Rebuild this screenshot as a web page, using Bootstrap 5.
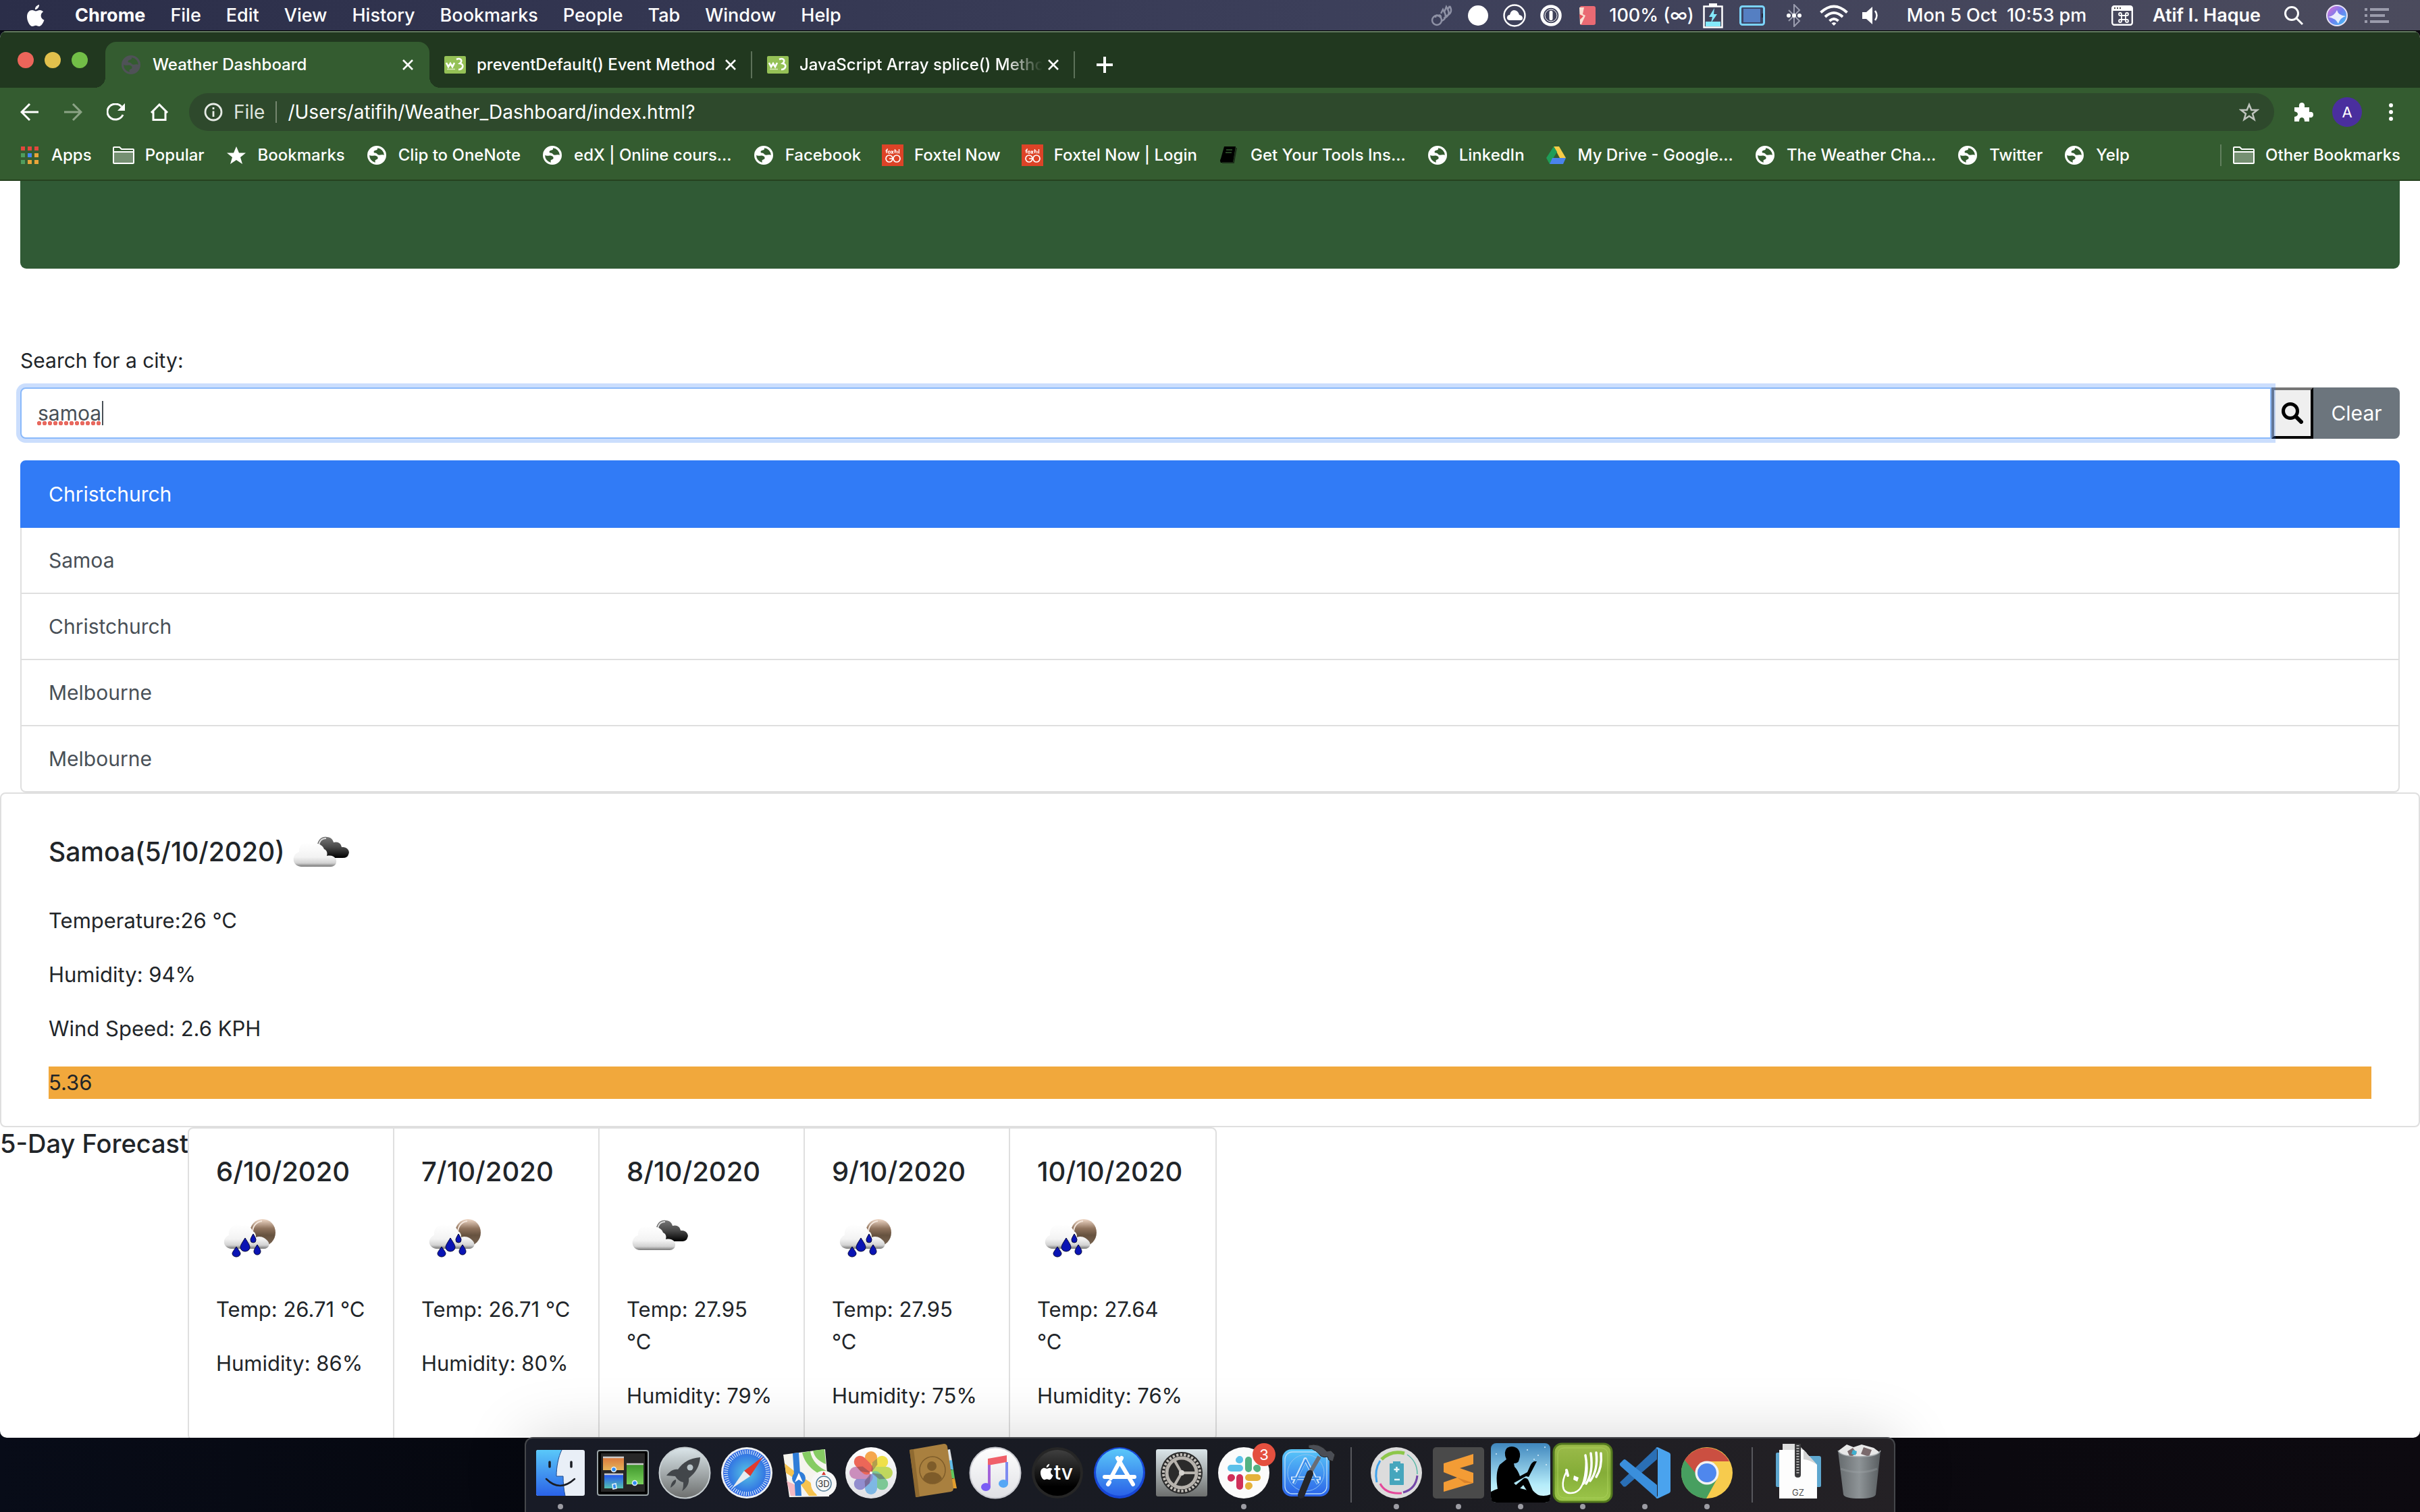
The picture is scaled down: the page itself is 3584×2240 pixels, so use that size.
<!DOCTYPE html>
<html lang="en">
<head>
<meta charset="utf-8">
<meta name="viewport" content="width=device-width, initial-scale=1">
<title>Weather Dashboard</title>
<link href="https://cdn.jsdelivr.net/npm/bootstrap@5.3.0/dist/css/bootstrap.min.css" rel="stylesheet">
<style>
:root{--strip:#21381f;--bar:#345c30;--omni:#2e492c;--rule:#dfdfdf}
body{font-family:Inter,"Liberation Sans",sans-serif;font-size:30px;line-height:48px;color:#212529;background:linear-gradient(90deg,#080c18,#05060c 30%,#0d0a10)}
a{color:inherit;text-decoration:none}
svg{display:block;flex:none}
button{font:inherit;color:inherit}
.desktop{height:100vh}
/* system menu bar */
.sysbar{height:46px;font-size:27px;line-height:44px;font-weight:500;color:#fff;background:linear-gradient(90deg,#2b2e49,#3c3f5a 55%,#4b4b5d);border-bottom:1px solid #000;padding-right:42px}
.sysmenu{gap:37px;padding-left:40px}
.slot{display:flex;justify-content:center;align-items:center;flex:none;width:54px;white-space:pre}
.s44{width:44px}.s46{width:46px}.s64{width:64px}.s70{width:70px}.s74{width:74px}.s132{width:136px}.s204{width:204px}.s326{width:326px}
/* browser window */
.browser{flex:1 1 0;min-height:0;border-radius:10px;overflow:hidden;background:#fff}
.tabstrip{height:84px;background:var(--strip);border-top:2px solid #627960;padding-top:14px;font-size:24px;line-height:32px;font-weight:500;color:#fff}
.lights{width:156px;padding:15px 0 0 26px;gap:16px}
.light{width:24px;height:24px;border-radius:50%}
.red{background:#ec655a}.amber{background:#e1c04c}.green{background:#72be47}
.tab{width:478px;height:68px;padding:0 20px 0 22px;gap:16px;position:relative}
.tab-on{width:480px;background:var(--bar);border-radius:16px 16px 0 0}
.tab-on::before,.tab-on::after{content:"";position:absolute;bottom:0;width:16px;height:16px}
.tab-on::before{left:-16px;background:radial-gradient(circle at 0 0,transparent 16px,var(--bar) 16px)}
.tab-on::after{right:-16px;background:radial-gradient(circle at 100% 0,transparent 16px,var(--bar) 16px)}
.tab-line::after{content:"";position:absolute;right:0;top:14px;height:40px;width:2px;background:#5d7159}
.tab-name{flex:1;white-space:nowrap;overflow:hidden;margin-right:-12px}
.tab-fade{-webkit-mask-image:linear-gradient(90deg,#000 84%,transparent);mask-image:linear-gradient(90deg,#000 84%,transparent)}
.bare{border:0;background:none;padding:0}
.tools{background:var(--bar);color:#fff;padding-top:8px;border-bottom:2px solid #26421f}
.navset{padding:0 12px}
.navbtn{width:64px;display:flex;justify-content:center}
.omni{flex:1;height:56px;border-radius:28px;background:var(--omni);padding:0 22px;gap:16px;font-size:28px;line-height:40px}
.omni input{flex:1;border:0;background:none;color:#fff;outline:0;padding:0;min-width:0}
.scheme{color:#dfe4de}
.omniline{width:2px;height:32px;background:#75866f}
.extbtn{padding:0 28px}
.dotsbtn{padding:0 40px}
.avatar{width:44px;height:44px;border-radius:50%;background:#4a2f9e;font-size:22px;line-height:44px}
.marks{height:72px;font-size:24px;line-height:32px;font-weight:500;gap:31px;padding:0 29px 0 28px;white-space:nowrap}
.marks a{display:flex;align-items:center;gap:16px}
.otherline{width:2px;height:32px;background:#62805e;margin-left:auto;margin-right:-14px}
/* dashboard page */
.pad{padding:0 30px}
.hero{height:130px;background:#305a35;border-radius:0 0 9px 9px;margin-bottom:112px}
.citylabel{margin-bottom:16px;display:block}
.searchrow{height:76px;margin-bottom:32px}
.cityinput{height:76px;border:2px solid #8ab9fa;border-radius:8px 0 0 8px;padding:12px 24px;font-size:30px;line-height:48px;color:#495057;position:relative;z-index:2}
.cityinput,.cityinput:focus{box-shadow:0 0 0 6px rgba(49,123,246,.25);border-color:#8ab9fa}
.caret{position:absolute;z-index:3;left:122px;top:20px;width:2px;height:36px;background:#495057}
.spell{position:absolute;z-index:3;left:26px;top:50px;width:94px;height:6px;background:radial-gradient(circle at 3px 3px,#e8695f 3px,transparent 3px) 0 0/8px 6px}
.findbtn{width:62px;border:4px outset #222;border-color:#767676 #222 #222 #767676;background:#efefef;padding:0;display:flex;align-items:center;justify-content:center}
.clearbtn{width:128px;padding:0;font-size:30px;border-radius:0 8px 8px 0;background:#6c757d;border:0}
.cities{--bs-list-group-border-color:var(--rule);--bs-list-group-border-width:2px;--bs-list-group-border-radius:8px;--bs-list-group-item-padding-x:40px;--bs-list-group-item-padding-y:24px;--bs-list-group-color:#495057;--bs-list-group-action-color:#495057;--bs-list-group-active-bg:#317bf6;--bs-list-group-active-border-color:#317bf6}
.today{border:2px solid var(--rule);border-radius:8px;padding:40px 70px}
.today p,.day p{font-size:31px;margin-bottom:32px}
.today p:last-child,.day p:last-child{margin-bottom:0}
.today .today-name{height:100px;margin-bottom:24px;gap:4px;font-size:39px}
.uv{background:#f1a83c}
.fc-name{flex:0 0 278px;min-width:0;font-size:38px;line-height:48px;white-space:nowrap;margin:0}
.days{border:2px solid var(--rule);border-radius:8px}
.day{width:304px;padding:40px;border-right:2px solid var(--rule)}
.day:last-child{border-right:0}
.day h5{font-size:40px;line-height:48px;margin-bottom:24px;white-space:nowrap}
.day svg{margin-bottom:32px}
/* dock */
.dock{height:111px;margin-top:-1px;padding:5px 5px 0;background:linear-gradient(90deg,#181b26,#191b22 50%,#242125);border:2px solid #45474b;border-bottom:0;border-radius:12px 12px 0 0;box-shadow:0 0 90px rgba(0,0,0,.17);position:relative;z-index:4}
.app{display:block;width:92px;position:relative}
.app.running::after{content:"";position:absolute;left:42px;top:92px;width:8px;height:8px;border-radius:50%;background:#9c9ca3}
.dockline{width:2px;height:82px;background:#57585d;margin:8px 20px 0}
.count{position:absolute;left:59px;top:2px;width:34px;height:34px;border-radius:50%;background:#e4503f;color:#fff;font-size:22px;line-height:34px;text-align:center}
</style>
</head>
<body>
<svg width="0" height="0" class="position-absolute" aria-hidden="true">
<defs>
<linearGradient id="gw" x2="0" y2="1"><stop stop-color="#fff"/><stop offset=".6" stop-color="#f3f3f3"/><stop offset=".85" stop-color="#d2d2d2"/><stop offset="1" stop-color="#777"/></linearGradient>
<linearGradient id="gk" x2="0" y2="1"><stop stop-color="#777"/><stop offset=".5" stop-color="#484848"/><stop offset="1" stop-color="#000"/></linearGradient>
<linearGradient id="gm" x2="0" y2="1"><stop stop-color="#f0d9c8"/><stop offset=".35" stop-color="#8f735d"/><stop offset=".6" stop-color="#66523f"/><stop offset="1" stop-color="#7a6654"/></linearGradient>
<linearGradient id="gsil" x2="0" y2="1"><stop stop-color="#dbe6ea"/><stop offset="1" stop-color="#6d6f6e"/></linearGradient>
<linearGradient id="gblue" x2="0" y2="1"><stop stop-color="#5ac8f9"/><stop offset="1" stop-color="#2a62e8"/></linearGradient>
<linearGradient id="gdisc" x2="0" y2="1"><stop stop-color="#fff"/><stop offset="1" stop-color="#dfe0e4"/></linearGradient>
<linearGradient id="gtv" x2="0" y2="1"><stop stop-color="#3f3f3f"/><stop offset=".8" stop-color="#000"/></linearGradient>
<linearGradient id="gkin" x2="0" y2="1"><stop stop-color="#3f86bd"/><stop offset=".7" stop-color="#b5ecfa"/><stop offset="1" stop-color="#d8f7fc"/></linearGradient>
<linearGradient id="gbin" x2="1" y2="0"><stop stop-color="#666b6e"/><stop offset=".5" stop-color="#8e9497"/><stop offset="1" stop-color="#585d60"/></linearGradient>
<radialGradient id="gsaf"><stop stop-color="#56c5e3"/><stop offset="1" stop-color="#2a62e3"/></radialGradient>
<linearGradient id="gor" x2="0" y2="1"><stop stop-color="#d9743a"/><stop offset="1" stop-color="#e5b35a"/></linearGradient>
<linearGradient id="ggr" x2="0" y2="1"><stop stop-color="#3f962c"/><stop offset="1" stop-color="#79d15b"/></linearGradient>
<linearGradient id="gbt" x2="0" y2="1"><stop stop-color="#2457ec"/><stop offset="1" stop-color="#55c1b2"/></linearGradient>
<linearGradient id="gnoor" x2="0" y2="1"><stop stop-color="#9cbb4a"/><stop offset=".5" stop-color="#85ad38"/><stop offset="1" stop-color="#9cc64a"/></linearGradient>
<linearGradient id="gsiri" x2="1" y2="1"><stop stop-color="#e86ad0"/><stop offset=".5" stop-color="#6f7ff0"/><stop offset="1" stop-color="#3cc8f5"/></linearGradient>
</defs>
<symbol id="globe" viewBox="0 0 28 28"><path fill="currentColor" fill-rule="evenodd" d="M14 0a14 14 0 1 1 0 28a14 14 0 0 1 0-28zM15 3.200C15.500 5 14.500 6.300 12.600 6.600C10.600 7 9.200 8 9.600 9.600C9.800 10.700 10.900 10.600 12.600 10.700C14.600 10.900 14.600 13.200 16.600 13.600C18.800 14 20.900 12.600 24.900 13.800A11 11 0 0 0 15 3.200zM3.100 14A11 11 0 0 0 11.400 24.700C12.600 24.200 10.600 22.300 12 21.200C13.400 20.100 15.300 20.300 15.600 18.300C15.900 16.200 13.900 14.900 11.300 14.500C8.800 14.100 5.800 15.600 3.100 14z"/></symbol>
<symbol id="folder" viewBox="0 0 32 26"><path d="M1 24V2q0-1 1-1h8l3 3h17q1 0 1 1v19q0 1-1 1H2q-1 0-1-1z" fill="none" stroke="#fff" stroke-width="2"/><path d="M2 8h28" stroke="#fff" stroke-width="2"/><path d="M2 9h28v15H2z" fill="#fff" opacity=".32"/></symbol>
<symbol id="w3" viewBox="0 0 32 26"><rect width="32" height="26" rx="2" fill="#95c156"/><path d="M3 10l3 6 3-5 3 5 3-6M18 5c6-3 10 2 5 6c7 1 5 9-2 9" fill="none" stroke="#fff" stroke-width="2.600"/><path d="M4 19.500h12" stroke="#d8eab8" stroke-width="1.500"/></symbol>
<symbol id="foxtel" viewBox="0 0 32 32"><rect width="32" height="32" fill="#dd4327"/><circle cx="11" cy="21" r="5" fill="none" stroke="#fff" stroke-width="1.700"/><circle cx="22" cy="21" r="5" fill="none" stroke="#fff" stroke-width="1.700"/><path d="M11 21h5" stroke="#fff" stroke-width="1.500"/><path d="M7 13V8q0-1 2-1M5.500 9.500h3M14 9.500l3 4m0-4l-3 4M19.500 7v6M18.500 9.500h3M25.500 7v6.500" stroke="#fff" stroke-width="1.300" fill="none"/><circle cx="11" cy="11.500" r="1.700" fill="none" stroke="#fff" stroke-width="1.200"/><circle cx="22.800" cy="11.500" r="1.300" fill="none" stroke="#fff"/></symbol>
<symbol id="closex" viewBox="0 0 16 16"><path d="M1 1l14 14M15 1L1 15" stroke="#fff" stroke-width="2.600"/></symbol>
<symbol id="applelogo" viewBox="0 0 26 32"><path fill="#fff" d="M18 0c.3 3.400-2.600 7-6 7.200C11.500 4 14.600.5 18 0zM24 10.500c-5 3-4.400 10 1.500 12.300C24 27 21 32 18 32c-2 0-2.700-1.300-5-1.300S9.700 32 8 32C4 32 0 24 0 18C0 11 4 8 7.500 8c2.400 0 4 1.500 5.500 1.500S17 8 19 8c2 0 4 1 5 2.500z"/></symbol>
<symbol id="clouds" viewBox="0 0 100 100"><path d="M44 42C42 30 50 22 58 24c6 0 9 4 10 8c6-2 11 1 12 7c8-1 13 6 10 11c-1 4-5 5-8 5H60z" fill="url(#gk)"/><path d="M46 38c0-7 4-12 11-12" stroke="#ddd" stroke-width="2" fill="none"/><path d="M20 68C6 67 5 50 17 46C15 36 27 28 36 35c6-4 16 0 18 7c5 2 5 7 4 10c9-2 15 3 14 9c0 4-4 7-8 7z" fill="url(#gw)"/></symbol>
<symbol id="nightrain" viewBox="0 0 100 100"><ellipse cx="69" cy="42" rx="19" ry="20" fill="url(#gm)"/><path d="M54 42c0-10 6-16 14-17" stroke="#f5e8de" stroke-width="2" fill="none"/><path d="M22 66C9 64 9 50 19 46C17 35 29 26 38 32c7-3 14 1 16 8c5 2 5 6 5 9c8-3 14 2 17 5c5 5 2 12-5 12z" fill="url(#gw)"/><g fill="#0a14b4" stroke="#05083a"><path d="M43 50c5 8 7 11 7 14a7 6 0 0 1-14 0c0-3 2-6 7-14z"/><path d="M55 44c3 5 4 7 4 9a4 4 0 0 1-8 0c0-2 1-4 4-9z"/><path d="M30 63c4 6 6 8 6 10a6 5 0 0 1-12 0c0-2 2-4 6-10z"/><path d="M61 60c4 6 5 8 5 10a5 5 0 0 1-10 0c0-2 1-4 5-10z"/></g></symbol>
</svg>

<div class="desktop d-flex flex-column overflow-hidden">
<header class="sysbar d-flex justify-content-between flex-shrink-0">
<nav class="sysmenu d-flex align-items-center" aria-label="System menu">
<svg width="26" height="32" class="me-2"><use href="#applelogo"/></svg>
<a href="#" class="fw-bold">Chrome</a><a href="#">File</a><a href="#">Edit</a><a href="#">View</a><a href="#">History</a><a href="#">Bookmarks</a><a href="#">People</a><a href="#">Tab</a><a href="#">Window</a><a href="#">Help</a>
</nav>
<div class="d-flex">
<span class="slot"><svg width="34" height="34" viewBox="0 0 34 34" fill="none" stroke="#8e91a5" stroke-width="2.500"><circle cx="10" cy="24" r="7"/><path d="M8 20q0-5 4-3q4-2 4 3M17 25c8-3 6-10 4-14M20 21c9-3 9-9 5-15M23 18c10-4 9-10 6-15M16 14l3-6 2 4 3-8 2 4 3-5"/></svg></span>
<span class="slot"><svg width="32" height="32"><circle cx="16" cy="16" r="15" fill="#fff"/></svg></span>
<span class="slot"><svg width="36" height="36" viewBox="0 0 36 36"><circle cx="18" cy="18" r="15.500" fill="none" stroke="#fff" stroke-width="2.400"/><path d="M10 25q-4-1-3-5q1-3 4-3q1-6 6-7q6 0 8 7q5 1 5 5q0 3-3 3z" fill="#fff"/></svg></span>
<span class="slot"><svg width="34" height="34" viewBox="0 0 34 34"><circle cx="17" cy="17" r="13.500" fill="none" stroke="#fff" stroke-width="4.500"/><rect x="14.500" y="10" width="5" height="14" rx="2" fill="#fff"/><circle cx="17" cy="17" r="9" fill="none" stroke="#fff" stroke-width="1"/></svg></span>
<span class="slot"><svg width="26" height="30" viewBox="0 0 26 30"><path d="M2 3q0-2 2-2h18q3 0 3 3v22q0 3-3 3H4q-2 0-2-2z" fill="#ea6a73"/><path d="M1 3h7l-2 10 4 2-6 13H2z" fill="#f9dfd2"/><path d="M1 13l6 3-5 5z" fill="#e4505a"/></svg></span>
<span class="slot s132">100% (∞)</span>
<span class="slot s46"><svg width="30" height="38" viewBox="0 0 30 38"><path d="M9 1h12v4H9z" fill="#fff"/><rect x="1.500" y="5.500" width="27" height="31" fill="none" stroke="#fff" stroke-width="2.500"/><path d="M4 28h22v7H4z" fill="#84e9fb"/><path d="M17 8L9 21h5l-2 9 9-13h-5z" fill="#84e9fb"/></svg></span>
<span class="slot s70"><svg width="38" height="30" viewBox="0 0 38 30"><rect x="1.500" y="1.500" width="35" height="27" rx="3" fill="#3c4566" stroke="#7bd4fb" stroke-width="3"/><rect x="6" y="5" width="25" height="20" fill="#557fc2"/><path d="M34 12v6" stroke="#223" stroke-width="2"/></svg></span>
<span class="slot"><svg width="26" height="34" viewBox="0 0 26 34"><path d="M5 9l16 16-8 8V1l8 8L5 25" fill="none" stroke="#9a9cae" stroke-width="2"/><g fill="#fff"><circle cx="5" cy="17" r="3"/><circle cx="13" cy="17" r="3"/><circle cx="21" cy="17" r="3"/></g></svg></span>
<span class="slot s64"><svg width="44" height="32" viewBox="0 0 44 32" fill="none" stroke="#fff" stroke-width="4"><path d="M2.500 11.500q19.500-18 39 0M9 18q13-12 26 0M15.500 24q6.500-6 13 0"/><path d="M18.500 27.500q3.500-3 7 0L22 31z" fill="#fff" stroke="none"/></svg></span>
<span class="slot s46"><svg width="26" height="26" viewBox="0 0 26 26"><path d="M0 8h6l9-8v26l-9-8H0z" fill="#fff"/><path d="M19 6q5 7 0 14" fill="none" stroke="#fff" stroke-width="2.500"/></svg></span>
<span class="slot s326">Mon 5 Oct  10:53 pm</span>
<span class="slot s46"><svg width="32" height="30" viewBox="0 0 32 30"><rect x="1.200" y="1.200" width="29.600" height="27.600" rx="3" fill="none" stroke="#fff" stroke-width="2.400"/><path d="M2 2h28v6H2z" fill="#fff"/><path d="M4 4h2M8 4h2M12 4h2" stroke="#444" stroke-width="2"/><path d="M13 14h6v6h-6zM13 14h-2a2 2 0 1 1 2-2zM19 14v-2a2 2 0 1 1 2 2zM19 20h2a2 2 0 1 1-2 2zM13 20v2a2 2 0 1 1-2-2z" fill="none" stroke="#fff" stroke-width="1.800" transform="translate(2 1)"/></svg></span>
<span class="slot s204 fw-semibold">Atif I. Haque</span>
<span class="slot"><svg width="30" height="30" viewBox="0 0 30 30" fill="none" stroke="#fff" stroke-width="3"><circle cx="12" cy="12" r="9.500"/><path d="M19 19l9 9"/></svg></span>
<span class="slot s74"><svg width="32" height="32" viewBox="0 0 32 32"><circle cx="16" cy="16" r="15" fill="url(#gsiri)" stroke="#e9e4f5" stroke-width="2"/><path d="M3 18q9-1 13-10q2 8 13 9q-8 2-11 11q-4-8-15-10z" fill="#fff" opacity=".85"/></svg></span>
<span class="slot s44"><svg width="36" height="22" viewBox="0 0 36 22" stroke="#9a9bab" stroke-width="4"><path d="M0 2h4M8 2h28M0 11h4M8 11h22M0 20h4M8 20h28"/></svg></span>
</div>
</header>

<div class="browser d-flex flex-column">
<div class="tabstrip d-flex flex-shrink-0">
<div class="lights d-flex flex-shrink-0"><span class="light red"></span><span class="light amber"></span><span class="light green"></span></div>
<div class="tab tab-on d-flex align-items-center"><svg width="32" height="28" color="#4f5257"><use href="#globe"/></svg><span class="tab-name">Weather Dashboard</span><button class="bare px-1" aria-label="Close tab"><svg width="16" height="16"><use href="#closex"/></svg></button></div>
<div class="tab tab-line d-flex align-items-center"><svg width="32" height="26"><use href="#w3"/></svg><span class="tab-name">preventDefault() Event Method</span><button class="bare px-1" aria-label="Close tab"><svg width="16" height="16"><use href="#closex"/></svg></button></div>
<div class="tab tab-line d-flex align-items-center"><svg width="32" height="26"><use href="#w3"/></svg><span class="tab-name tab-fade">JavaScript Array splice() Method</span><button class="bare px-1" aria-label="Close tab"><svg width="16" height="16"><use href="#closex"/></svg></button></div>
<button class="bare d-flex align-items-center ms-3 px-3" aria-label="New tab"><svg width="24" height="24" viewBox="0 0 24 24"><path d="M12 0v24M0 12h24" stroke="#fff" stroke-width="4"/></svg></button>
</div>
<div class="tools flex-shrink-0">
<div class="d-flex align-items-center">
<div class="d-flex navset">
<button class="bare navbtn" aria-label="Back"><svg width="28" height="26" viewBox="0 0 28 26" fill="none" stroke="#fff" stroke-width="3"><path d="M27 13H3M14 1L2 13l12 12"/></svg></button>
<button class="bare navbtn" aria-label="Forward"><svg width="28" height="26" viewBox="0 0 28 26" fill="none" stroke="#8ba385" stroke-width="3"><path d="M1 13h24M14 1l12 12-12 12"/></svg></button>
<button class="bare navbtn" aria-label="Reload"><svg width="28" height="26" viewBox="0 0 28 26"><path d="M24 17A12 11.500 0 1 1 22 5" fill="none" stroke="#fff" stroke-width="3"/><path d="M27 0v11H16z" fill="#fff"/></svg></button>
<button class="bare navbtn" aria-label="Home"><svg width="28" height="26" viewBox="0 0 28 26" fill="none" stroke="#fff" stroke-width="3"><path d="M2 14L14 2l12 12M5 12v12.500h18V12"/></svg></button>
</div>
<div class="omni d-flex align-items-center">
<svg width="28" height="28" viewBox="0 0 28 28" fill="none" stroke="#e6eae5" stroke-width="2.800"><circle cx="14" cy="14" r="12"/><path d="M14 12.500V21M14 7v3"/></svg>
<span class="scheme">File</span>
<span class="omniline"></span>
<input type="text" value="/Users/atifih/Weather_Dashboard/index.html?" aria-label="Address">
<svg width="30" height="28" viewBox="0 0 30 28"><path d="M15 3l3.300 8H27l-7 5.500L22.500 25 15 20l-7.500 5L10 16.500 3 11h8.700z" fill="none" stroke="#bfc4be" stroke-width="2.500"/></svg>
</div>
<button class="bare extbtn" aria-label="Extensions"><svg width="30" height="30" viewBox="0 0 30 30"><path d="M2 8h7q-1-7 4-7t4 7h7v7q6-1 6 4t-6 4v6h-7q0-6-4-6t-4 6H2v-7q5-1 5-4t-5-4z" fill="#fff"/></svg></button>
<span class="avatar text-center">A</span>
<button class="bare dotsbtn" aria-label="Menu"><svg width="6" height="26" viewBox="0 0 6 26" fill="#fff"><circle cx="3" cy="3" r="3"/><circle cx="3" cy="13" r="3"/><circle cx="3" cy="23" r="3"/></svg></button>
</div>
<nav class="marks d-flex align-items-center" aria-label="Bookmarks">
<a href="#"><svg width="32" height="26" viewBox="0 0 32 26"><path d="M3 0h6v6H3zM13 0h6v6h-6zM23 0h6v6h-6z" fill="#e2483d"/><path d="M3 10h6v6H3zM3 20h6v6H3z" fill="#4f9d5d"/><path d="M13 10h6v6h-6z" fill="#4285f4"/><path d="M23 10h6v6h-6zM13 20h6v6h-6zM23 20h6v6h-6z" fill="#e8a53a"/></svg>Apps</a>
<a href="#"><svg width="32" height="26"><use href="#folder"/></svg>Popular</a>
<a href="#"><svg width="32" height="28" viewBox="0 0 32 28"><path d="M16 1l4 9.500H30l-8 6.500L25 27 16 21 7 27l3-10L2 10.500h10z" fill="#fff"/></svg>Bookmarks</a>
<a href="#"><svg width="32" height="28"><use href="#globe"/></svg>Clip to OneNote</a>
<a href="#"><svg width="32" height="28"><use href="#globe"/></svg>edX | Online cours...</a>
<a href="#"><svg width="32" height="28"><use href="#globe"/></svg>Facebook</a>
<a href="#"><svg width="32" height="32"><use href="#foxtel"/></svg>Foxtel Now</a>
<a href="#"><svg width="32" height="32"><use href="#foxtel"/></svg>Foxtel Now | Login</a>
<a href="#"><svg width="32" height="26" viewBox="0 0 32 26"><path d="M9 0h17l-4 24H4q-2-3 0-6z" fill="#000"/><path d="M27 2l-4 22H6" fill="none" stroke="#1a2b18" stroke-width="2"/><path d="M12 5h9M11 9h9" stroke="#345c30" stroke-width="1.500"/></svg>Get Your Tools Ins...</a>
<a href="#"><svg width="32" height="28"><use href="#globe"/></svg>LinkedIn</a>
<a href="#"><svg width="32" height="28" viewBox="0 0 32 28"><path d="M12 1h8l10 17h-9z" fill="#f8cc46"/><path d="M12 1l5 8L6 27l-5-9z" fill="#1f9d58"/><path d="M10 18h20l-4 9H6z" fill="#4a83ee"/></svg>My Drive - Google...</a>
<a href="#"><svg width="32" height="28"><use href="#globe"/></svg>The Weather Cha...</a>
<a href="#"><svg width="32" height="28"><use href="#globe"/></svg>Twitter</a>
<a href="#"><svg width="32" height="28"><use href="#globe"/></svg>Yelp</a>
<span class="otherline"></span>
<a href="#"><svg width="32" height="26"><use href="#folder"/></svg>Other Bookmarks</a>
</nav>
</div>

<main class="flex-grow-1 overflow-hidden">
<div class="pad">
<div class="hero"></div>
<label class="citylabel" for="city">Search for a city:</label>
<div class="input-group searchrow flex-nowrap">
<input id="city" class="form-control cityinput" type="text" value="samoa" spellcheck="false">
<span class="caret"></span><span class="spell"></span>
<button class="findbtn ms-0" aria-label="Search"><svg width="32" height="32" viewBox="0 0 32 32" fill="none" stroke="#000"><circle cx="13" cy="13" r="10.500" stroke-width="5"/><path d="M21 21l8 8" stroke-width="6" stroke-linecap="round"/></svg></button>
<button class="btn btn-secondary clearbtn ms-0">Clear</button>
</div>
<div class="list-group cities">
<a href="#" class="list-group-item list-group-item-action active">Christchurch</a>
<a href="#" class="list-group-item list-group-item-action">Samoa</a>
<a href="#" class="list-group-item list-group-item-action">Christchurch</a>
<a href="#" class="list-group-item list-group-item-action">Melbourne</a>
<a href="#" class="list-group-item list-group-item-action">Melbourne</a>
</div>
</div>
<section class="today">
<h4 class="today-name d-flex align-items-center"><span class="pb-2">Samoa(5/10/2020)</span><svg width="100" height="100"><use href="#clouds"/></svg></h4>
<p>Temperature:26 °C</p>
<p>Humidity: 94%</p>
<p>Wind Speed: 2.6 KPH</p>
<p class="uv">5.36</p>
</section>
<section class="d-flex align-items-start">
<h5 class="fc-name">5-Day Forecast</h5>
<div class="days d-flex">
<article class="day"><h5>6/10/2020</h5><svg width="100" height="100"><use href="#nightrain"/></svg><p>Temp: 26.71 °C</p><p>Humidity: 86%</p></article>
<article class="day"><h5>7/10/2020</h5><svg width="100" height="100"><use href="#nightrain"/></svg><p>Temp: 26.71 °C</p><p>Humidity: 80%</p></article>
<article class="day"><h5>8/10/2020</h5><svg width="100" height="100"><use href="#clouds"/></svg><p>Temp: 27.95 °C</p><p>Humidity: 79%</p></article>
<article class="day"><h5>9/10/2020</h5><svg width="100" height="100"><use href="#nightrain"/></svg><p>Temp: 27.95 °C</p><p>Humidity: 75%</p></article>
<article class="day"><h5>10/10/2020</h5><svg width="100" height="100"><use href="#nightrain"/></svg><p>Temp: 27.64 °C</p><p>Humidity: 76%</p></article>
</div>
</section>
</main>
</div>

<footer class="dock d-flex align-self-center align-items-start flex-shrink-0">
<a href="#" class="app running" aria-label="Finder"><svg width="92" height="92" viewBox="0 0 92 92"><rect x="10" y="12" width="72" height="68" rx="3" fill="#e9eff7"/><path d="M13 12h35c-5 10-8 25-8 39h10c0 10 1 20 3 29H13q-3 0-3-3V15q0-3 3-3z" fill="url(#gblue)"/><path d="M48 12c-5 10-8 25-8 39h10c0 10 1 20 3 29" fill="none" stroke="#1f4b8f" stroke-width="1"/><path d="M30 30v7M62 30v7" stroke="#1a1d24" stroke-width="3.500" stroke-linecap="round"/><path d="M25 55q20 20 42 0" fill="none" stroke="#1a1d24" stroke-width="2.500" stroke-linecap="round"/></svg></a>
<a href="#" class="app" aria-label="Mission Control"><svg width="92" height="92" viewBox="0 0 92 92"><rect x="9" y="13" width="75" height="66" rx="3" fill="#000" stroke="#98a2a5" stroke-width="2"/><rect x="14" y="17" width="65" height="57" fill="#272727"/><rect x="17" y="22" width="31" height="20" fill="url(#gor)"/><rect x="52" y="34" width="25" height="29" fill="url(#ggr)"/><rect x="19" y="49" width="28" height="20" fill="url(#gbt)"/><path d="M17 23h31M52 33h25M19 48h28" stroke="#ccc" stroke-width="2.500"/><g fill="#2f8cf0" stroke="#e6f1fb" stroke-width="1.500"><circle cx="33" cy="41" r="3.500"/><circle cx="64" cy="61" r="3.500"/><path d="M31 63l5-1 1 7-5 1z"/></g></svg></a>
<a href="#" class="app" aria-label="Launchpad"><svg width="92" height="92" viewBox="0 0 92 92"><circle cx="46" cy="46" r="37.500" fill="url(#gsil)" stroke="#c7ced1" stroke-width="2"/><path d="M69 23c-14 1-26 7-33 18c-7-1-12 3-17 9l13 1c3 5 7 8 12 9c0 5 0 9-2 13c7-5 11-11 10-19c11-9 16-18 17-31zM25 68c1-6 3-11 8-12c1 5-3 9-8 12z" fill="#42464a"/><circle cx="54" cy="38" r="4.500" fill="#b9c4c8"/></svg></a>
<a href="#" class="app" aria-label="Safari"><svg width="92" height="92" viewBox="0 0 92 92"><circle cx="46" cy="46" r="38" fill="#edf0f3"/><circle cx="46" cy="46" r="35" fill="url(#gsaf)"/><circle cx="46" cy="46" r="31" fill="none" stroke="#d5e9f8" stroke-width="6" stroke-dasharray="1.200 2.046"/><path d="M70 22L51 51l-9-8z" fill="#e13a2e"/><path d="M24 69l18-26 9 8z" fill="#e8ecef"/></svg></a>
<a href="#" class="app" aria-label="Maps"><svg width="92" height="92" viewBox="0 0 92 92"><path d="M8 19l62-8 6 70-59 1z" fill="#f5f4ee"/><path d="M10 32l20 16 18 12 10 20h-12L30 58 12 46z" fill="#f6c34e"/><path d="M13 58l18 8 1 14H19z" fill="#f4b9c2"/><path d="M22 17l9-1 4 64h-9z" fill="#2f7dd8"/><path d="M36 16l12-2c2 14 12 24 26 30v8C56 48 40 34 36 16zM52 13l17-2 2 22c-10-4-17-10-19-20z" fill="#86cc63"/><circle cx="31" cy="54" r="10" fill="#2f7dd8"/><path d="M31 46l6 14-6-4-6 4z" fill="#fff"/><circle cx="68" cy="62" r="19" fill="#f7f7f7"/><circle cx="68" cy="62" r="11" fill="none" stroke="#54809c" stroke-width="1.500"/><path d="M68 44l3 5h-6z" fill="#d5342a"/><text x="68" y="67" font-size="13" text-anchor="middle" fill="#333" font-family="Inter,sans-serif">3D</text></svg></a>
<a href="#" class="app" aria-label="Photos"><svg width="92" height="92" viewBox="0 0 92 92"><circle cx="46" cy="46" r="38" fill="url(#gdisc)"/><g opacity=".92"><rect x="37" y="14" width="18" height="32" rx="9" fill="#f5a040"/><rect x="37" y="14" width="18" height="32" rx="9" fill="#efdf3c" transform="rotate(45 46 46)"/><rect x="37" y="14" width="18" height="32" rx="9" fill="#bdd651" transform="rotate(90 46 46)"/><rect x="37" y="14" width="18" height="32" rx="9" fill="#74c58e" transform="rotate(135 46 46)"/><rect x="37" y="14" width="18" height="32" rx="9" fill="#76b4e4" transform="rotate(180 46 46)"/><rect x="37" y="14" width="18" height="32" rx="9" fill="#8b86cc" transform="rotate(225 46 46)"/><rect x="37" y="14" width="18" height="32" rx="9" fill="#c886b8" transform="rotate(270 46 46)"/><rect x="37" y="14" width="18" height="32" rx="9" fill="#ec5b4b" transform="rotate(315 46 46)"/></g><path d="M46 46l4-15-4-8-4 8zM46 46l15-4 8 4-8 4zM46 46l4 15-4 8-4-8zM46 46l-15-4-8 4 8 4z" fill="#5a3c50" opacity=".4" transform="rotate(22.500 46 46)"/><circle cx="46" cy="46" r="2" fill="#fff"/></svg></a>
<a href="#" class="app" aria-label="Contacts"><svg width="92" height="92" viewBox="0 0 92 92"><path d="M66 12l5-1 3 17h-6z" fill="#dfe3e5"/><path d="M68 28l6-1 2 14h-6z" fill="#62bdea"/><path d="M70 42l6-1 2 13h-6z" fill="#5fc85f"/><path d="M72 55l6-1 3 15h-7z" fill="#e39e2d"/><path d="M11 12l51-9q4 0 5 4l9 62q0 4-4 5l-51 8z" fill="#a9803f"/><path d="M11 12l6-1 9 70-6 1z" fill="#8f6a31"/><ellipse cx="45" cy="42" rx="19" ry="20" fill="none" stroke="#7e5c2a" stroke-width="1.500"/><circle cx="44" cy="36" r="7" fill="#7e5c2a"/><path d="M31 55q2-10 13-10t15 9q-6 8-14 8t-14-7z" fill="#7e5c2a"/></svg></a>
<a href="#" class="app" aria-label="Music"><svg width="92" height="92" viewBox="0 0 92 92"><circle cx="46" cy="46" r="37.500" fill="url(#gdisc)" stroke="#c9cad0" stroke-width="2"/><path d="M35 25l28-5v10l-28 5z" fill="#f0606a"/><path d="M63 30v32" stroke="#7d8cf0" stroke-width="4"/><path d="M37 34v33" stroke="#a363d8" stroke-width="4"/><ellipse cx="32" cy="67" rx="7" ry="6" fill="#7a5df5"/><ellipse cx="58" cy="62" rx="7" ry="6" fill="#55a7f5"/></svg></a>
<a href="#" class="app" aria-label="TV"><svg width="92" height="92" viewBox="0 0 92 92"><circle cx="46" cy="46" r="38" fill="#262626"/><circle cx="46" cy="46" r="34" fill="url(#gtv)"/><use href="#applelogo" x="21" y="32" width="19" height="25"/><text x="55" y="56" font-size="30" font-weight="500" text-anchor="middle" fill="#fff" font-family="Inter,sans-serif">tv</text></svg></a>
<a href="#" class="app" aria-label="App Store"><svg width="92" height="92" viewBox="0 0 92 92"><circle cx="46" cy="46" r="38" fill="#1747d6"/><circle cx="46" cy="45" r="35" fill="url(#gblue)"/><g stroke="#fff" stroke-width="6" stroke-linecap="round"><path d="M49 24L33 54M43 24l23 39M24 52h44"/><path d="M31 60l-2 3"/></g></svg></a>
<a href="#" class="app" aria-label="System Preferences"><svg width="92" height="92" viewBox="0 0 92 92"><rect x="8" y="11" width="76" height="70" rx="3" fill="url(#gsil)"/><circle cx="46" cy="46" r="31" fill="#2b2b2b"/><circle cx="46" cy="46" r="27" fill="none" stroke="#c4c0ba" stroke-width="4" stroke-dasharray="3.300 2.355"/><circle cx="46" cy="46" r="22" fill="none" stroke="#b7b3ad" stroke-width="5"/><path d="M46 46h22M46 46L35 27M46 46L35 65" stroke="#b7b3ad" stroke-width="4"/><circle cx="46" cy="46" r="4" fill="#d4d2ce"/></svg></a>
<a href="#" class="app running" aria-label="Slack, 3 unread"><svg width="92" height="92" viewBox="0 0 92 92"><circle cx="46" cy="46" r="38" fill="#fbfbfb"/><g stroke-width="10" stroke-linecap="round"><path d="M27 39h13" stroke="#5dc1ea"/><path d="M40 26v1M40 27h-1" stroke="#5dc1ea"/><path d="M53 27v13" stroke="#54b283"/><path d="M66 39v1M66 39h-1" stroke="#54b283"/><path d="M53 53h13" stroke="#e5b23c"/><path d="M53 65v1M53 65h1" stroke="#e5b23c"/><path d="M40 53v13" stroke="#d0305a"/><path d="M27 53v1M27 53h1" stroke="#d0305a"/></g></svg><span class="count">3</span></a>
<a href="#" class="app" aria-label="Xcode"><svg width="92" height="92" viewBox="0 0 92 92"><rect x="11" y="11" width="70" height="70" rx="14" fill="url(#gblue)"/><rect x="15" y="15" width="62" height="62" rx="11" fill="none" stroke="#b8dcf7" stroke-width="1.300"/><circle cx="46" cy="46" r="27" fill="none" stroke="#8cc3f2" stroke-width="1"/><path d="M46 24L28 62M44 24l20 38M24 54h44" stroke="#cfe6fa" stroke-width="5"/><path d="M46 26L29 62M45 26l18 36M26 54h40" stroke="#398be9" stroke-width="2.500"/><path d="M66 22L52 46" stroke="#6a6d74" stroke-width="6"/><path d="M52 47L39 79" stroke="#25262b" stroke-width="10" stroke-linecap="round"/><path d="M50 5q16-4 27 9l6-1 6 6-3 10-6-2-2-5q-5 2-10-1-6-9-18-12z" fill="#4b4e55" stroke="#222" stroke-width="1"/></svg></a>
<span class="dockline"></span>
<a href="#" class="app running" aria-label="Battery Health"><svg width="92" height="92" viewBox="0 0 92 92"><circle cx="46" cy="46" r="38" fill="#dcdcdc"/><g fill="none" stroke-width="3"><path d="M24 26q14-14 34-9" stroke="#8dc74a" stroke-width="5"/><path d="M62 19q15 10 15 29" stroke="#58b8a6" stroke-width="1.500"/><path d="M77 50q-2 20-21 25" stroke="#7446a8"/><path d="M54 76q-24 2-32-14" stroke="#e4489a"/><path d="M17 60q-4-18 5-32" stroke="#3fa2ec"/></g><rect x="36" y="32" width="21" height="32" rx="1" fill="#46a6bd"/><rect x="41" y="29" width="11" height="4" fill="#46a6bd"/><path d="M46.500 37v8M42.500 41h8M43 56h8" stroke="#e8f5f8" stroke-width="2.500"/></svg></a>
<a href="#" class="app running" aria-label="Sublime Text"><svg width="92" height="92" viewBox="0 0 92 92"><rect x="8" y="8" width="76" height="76" rx="5" fill="#4a4a4a"/><path d="M24 32l44-14v15L48 39l20 7v15L24 74V60l20-7-20-8z" fill="#f39c35"/><path d="M44 53l24 8-13 0z" fill="#d9822a"/></svg></a>
<a href="#" class="app running" aria-label="Kindle"><svg width="92" height="92" viewBox="0 0 92 92"><rect x="2" y="2" width="88" height="88" rx="8" fill="url(#gkin)"/><path d="M2 74q14-8 36-6 16 1 30 10 12 4 22 0v4q0 8-8 8H10q-8 0-8-8z" fill="#000"/><path d="M26 9q7-4 14 0 6 4 5 13l-2 7q-2 3-7 3l1 5q5 5 8 14l11-6 4-9q2-5 6-7h4L58 52l-4-1-18 10 3 3 12-10q5-1 7 4l6 14q6 7 14 9v2H62L50 64l-10 10-28-4q-4-24 3-36l10-8q-5-11 1-17z" fill="#000"/><g fill="#d9f1fb"><circle cx="56" cy="12" r="1"/><circle cx="72" cy="20" r="1"/><circle cx="82" cy="8" r="1"/><circle cx="10" cy="18" r="1"/><circle cx="66" cy="26" r="1"/><circle cx="84" cy="34" r="1"/></g></svg></a>
<a href="#" class="app running" aria-label="Arabic reader"><svg width="92" height="92" viewBox="0 0 92 92"><rect x="3" y="3" width="86" height="86" rx="12" fill="url(#gnoor)" stroke="#54791e" stroke-width="3"/><rect x="9" y="9" width="74" height="74" rx="9" fill="none" stroke="#a9cf58" stroke-width="1"/><g fill="none" stroke="#fff" stroke-linecap="round"><path d="M22 44C14 60 14 76 28 76C44 76 50 60 51 30" stroke-width="2.500"/><path d="M22 42l2 8" stroke-width="4"/><path d="M50 20Q55 48 47 62M58 17Q62 46 51 62M66 16Q69 42 57 58M73 17Q75 38 66 52" stroke-width="3.500"/></g><path d="M33 50l7 3-2 6-6-3z" fill="#fff"/></svg></a>
<a href="#" class="app running" aria-label="Visual Studio Code"><svg width="92" height="92" viewBox="0 0 92 92"><path d="M9 60l5 6q2 1 4 0l46-40V8z" fill="#2a6fb5"/><path d="M9 32l5-5q2-2 4 0l46 37v20L10 36q-2-2-1-4z" fill="#3a8fdc"/><path d="M62 9l3-1 17 8q2 1 2 3v54q0 2-2 3l-17 8-3-1q3-1 3-4V13q0-3-3-4z" fill="#4aa3ee"/></svg></a>
<a href="#" class="app running" aria-label="Chrome"><svg width="92" height="92" viewBox="0 0 92 92"><circle cx="46" cy="46" r="38" fill="#f7cb4d"/><path d="M13 27A38 38 0 0 1 79 29H46L30 54z" fill="#cb4f41"/><path d="M13 27A38 38 0 0 0 45 84L61 55H46L32 50z" fill="#479f60"/><circle cx="46" cy="46" r="17.500" fill="#f2f2f2"/><circle cx="46" cy="46" r="14" fill="#4f87ed"/></svg></a>
<span class="dockline"></span>
<a href="#" class="app" aria-label="Downloads"><svg width="92" height="92" viewBox="0 0 92 92"><path d="M14 18q0-2 2-2h16l3 5h43q3 0 3 3v41q0 2-2 2H16q-2 0-2-2z" fill="#5ea7cf"/><path d="M24 3h22l14 14v30H24z" fill="#ddd"/><path d="M19 12h36l20 22v50H19z" fill="#fdfdfd"/><path d="M55 12v14q8 0 20 8z" fill="#d3d3d3"/><path d="M42 3h9v46q0 4-4.500 4T42 49z" fill="#3a3a3c"/><path d="M46.500 5v44" stroke="#c9c9c9" stroke-width="4" stroke-dasharray="1.500 2.500"/><text x="47" y="80" font-size="13" text-anchor="middle" fill="#555" font-family="Inter,sans-serif">GZ</text></svg></a>
<a href="#" class="app" aria-label="Trash"><svg width="92" height="92" viewBox="0 0 92 92"><path d="M15 13l12-9 10 4 12-4 18 5 8 6v10H17z" fill="#e8e8e8"/><path d="M28 14l8-5 6 8-10 6zM52 8l12 4-4 10-12-4z" fill="#7a6a6c"/><path d="M36 12l6 2-2 6-6-2z" fill="#3fb0cf"/><path d="M14 13q4 9 32 9t31-9l-7 65q-2 6-24 6t-24-6z" fill="url(#gbin)"/><path d="M14 13q4 9 32 9t31-9" fill="none" stroke="#a4aaad" stroke-width="1.500"/><path d="M18 40q28 10 54 0" stroke="#a7adaf" stroke-width="3" opacity=".3" fill="none"/></svg></a>
</footer>
</div>
<script src="https://cdn.jsdelivr.net/npm/bootstrap@5.3.0/dist/js/bootstrap.bundle.min.js"></script>
</body>
</html>
